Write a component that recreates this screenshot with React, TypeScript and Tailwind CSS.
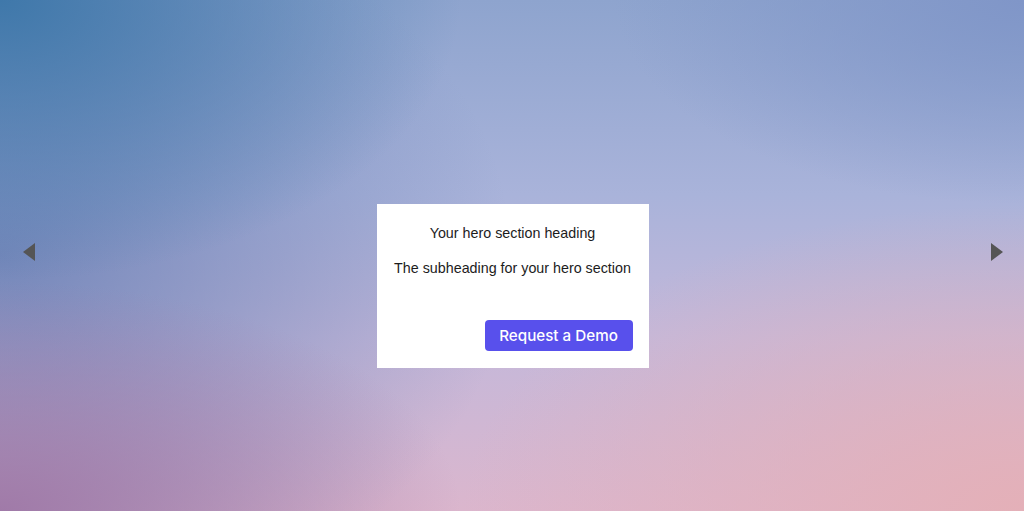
export default function App() {
  return (
    <div
      className="relative w-full h-[511px] overflow-hidden bg-[image:radial-gradient(ellipse_45%_45%_at_0%_100%,rgba(160,122,168,1)_0%,rgba(160,122,168,0)_100%),radial-gradient(ellipse_45%_55%_at_0%_0%,rgba(63,120,170,1)_0%,rgba(63,120,170,0)_100%),radial-gradient(ellipse_50%_75%_at_0%_50%,rgba(100,124,178,0.8)_0%,rgba(100,124,178,0)_100%),radial-gradient(ellipse_55%_60%_at_100%_100%,rgba(228,176,184,1)_0%,rgba(228,176,184,0)_100%),radial-gradient(ellipse_40%_40%_at_100%_0%,rgba(128,150,200,1)_0%,rgba(128,150,200,0)_100%),linear-gradient(to_bottom,#8ea4ce_0%,#a9b3da_38%,#c4b8da_66%,#dbb6cd_100%)]"
    >
      <div className="flex h-full flex-col items-center pt-[204px] pl-px">
        <div className="flex w-[272px] h-[164px] flex-col bg-white px-4 pt-[17px] pb-[17px]">
          <h1
            className="whitespace-nowrap text-center text-[14.3px] leading-[24px] font-normal text-[#1c1c1c]"
            style={{ fontFamily: "'Liberation Sans', Arial, sans-serif" }}
          >
            Your hero section heading
          </h1>
          <p
            className="mt-[11px] whitespace-nowrap text-center text-[14.3px] leading-[24px] text-[#1c1c1c]"
            style={{ fontFamily: "'Liberation Sans', Arial, sans-serif" }}
          >
            The subheading for your hero section
          </p>
          <div className="mt-auto flex justify-end">
            <button
              className="h-[31px] w-[148px] rounded-[4px] bg-[#5850ec] pt-[2px] text-[15.2px] font-medium text-white"
              style={{ fontFamily: "Inter, sans-serif" }}
            >
              Request a Demo
            </button>
          </div>
        </div>
      </div>
      <button
        aria-label="Previous"
        className="absolute left-[23px] top-[243px] h-0 w-0 border-y-[9.5px] border-r-[12px] border-y-transparent border-r-[#555555]"
      />
      <button
        aria-label="Next"
        className="absolute left-[991px] top-[243px] h-0 w-0 border-y-[9.5px] border-l-[12px] border-y-transparent border-l-[#555555]"
      />
    </div>
  );
}
